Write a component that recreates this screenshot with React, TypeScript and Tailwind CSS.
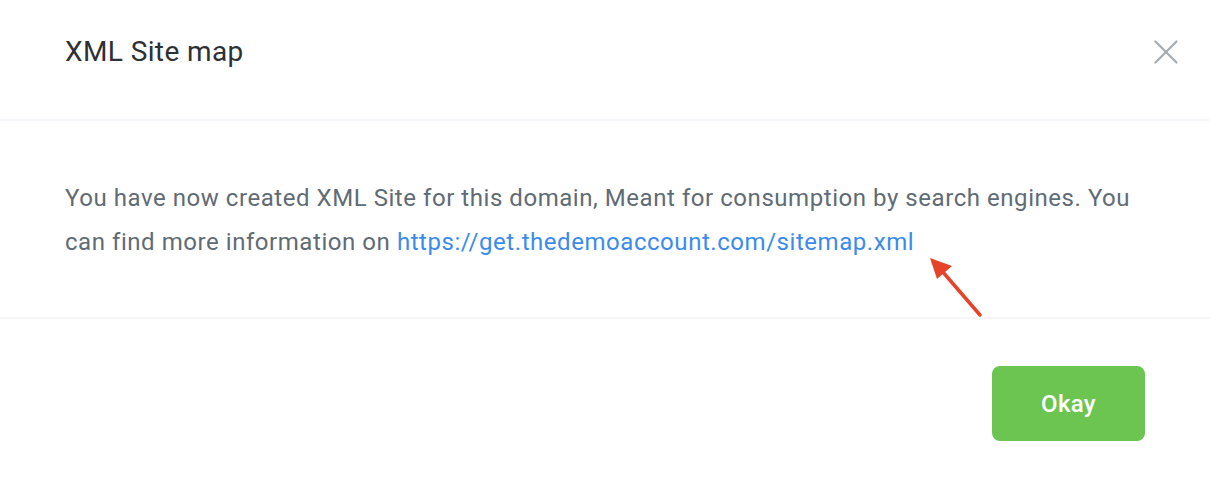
import { X } from 'lucide-react';

export default function App() {
    return (
        <div className="relative h-[480px] w-[1210px] bg-white font-['Roboto',sans-serif]">
            <div className="flex h-[121px] items-center justify-between border-b-2 border-[#f3f5f8] pl-[65px] pr-[23px]">
                <h1 className="pb-[16px] text-[28px] tracking-[0.4px] text-[#2d3136]">XML Site map</h1>
                <X className="mb-[16px] h-[42px] w-[42px] text-[#a6adb3]" strokeWidth={1.3} />
            </div>
            <div className="flex h-[198px] items-center border-b-2 border-[#f3f5f8] px-[65px]">
                <p className="pt-[2px] text-[24px] leading-[44px] tracking-[0.55px] text-[#5f6b75]">
                    You have now created XML Site for this domain, Meant for consumption by search engines. You can find more information on{' '}
                    <a href="#" className="text-[#3b8beb]">https://get.thedemoaccount.com/sitemap.xml</a>
                </p>
            </div>
            <div className="flex justify-end px-[65px] pt-[47px]">
                <button className="h-[75px] w-[153px] rounded-[8px] bg-[#6cc551] text-[24px] font-medium tracking-[0.3px] text-white">Okay</button>
            </div>
            <svg className="absolute left-[925px] top-[252px]" width="64" height="72" viewBox="0 0 64 72">
                <line x1="55" y1="63" x2="17" y2="19" stroke="#e6432b" strokeWidth="3.5" strokeLinecap="round" />
                <polygon points="5,6 27,14 12,27" fill="#e6432b" />
            </svg>
        </div>
    );
}
